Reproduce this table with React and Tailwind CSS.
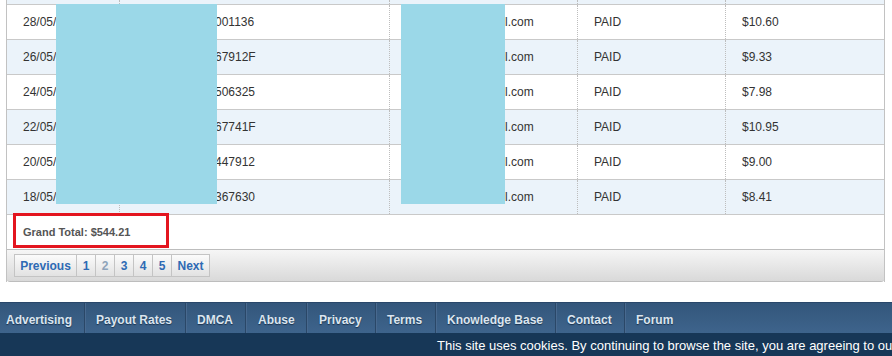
const rows = [
  { date: "28/05/2017", ref: "001136", email: "l.com", status: "PAID", amount: "$10.60" },
  { date: "26/05/2017", ref: "67912F", email: "l.com", status: "PAID", amount: "$9.33" },
  { date: "24/05/2017", ref: "506325", email: "l.com", status: "PAID", amount: "$7.98" },
  { date: "22/05/2017", ref: "67741F", email: "l.com", status: "PAID", amount: "$10.95" },
  { date: "20/05/2017", ref: "447912", email: "l.com", status: "PAID", amount: "$9.00" },
  { date: "18/05/2017", ref: "367630", email: "l.com", status: "PAID", amount: "$8.41" },
];

const navLinks = [
  { label: "Advertising", w: "w-[85px] pl-[6px]" },
  { label: "Payout Rates", w: "w-[101px] pl-[11px]" },
  { label: "DMCA", w: "w-[60px] pl-[11px]" },
  { label: "Abuse", w: "w-[61px] pl-[12px]" },
  { label: "Privacy", w: "w-[69px] pl-[12px]" },
  { label: "Terms", w: "w-[60px] pl-[11px]" },
  { label: "Knowledge Base", w: "w-[120px] pl-[11px]" },
  { label: "Contact", w: "w-[69px] pl-[11px]" },
  { label: "Forum", w: "pl-[11px]", last: true },
];

const pages = [
  { label: "Previous", w: "w-[63px]" },
  { label: "1", w: "w-[19px]" },
  { label: "2", w: "w-[19px]", current: true },
  { label: "3", w: "w-[19px]" },
  { label: "4", w: "w-[19px]" },
  { label: "5", w: "w-[19px]" },
  { label: "Next", w: "w-[38px]" },
];

const cell = "flex items-center pl-4 whitespace-nowrap overflow-hidden";
const sep = "border-l border-dotted border-[#bdbdbd]";

const Cells = ({ row }) => (
  <>
    <div className={`w-[112px] ${cell}`}>{row?.date}</div>
    <div className={`w-[270px] ${cell} ${sep}`}>
      {row && <span className="inline-block w-[79px] shrink-0" />}
      {row?.ref}
    </div>
    <div className={`w-[188px] ${cell} ${sep}`}>
      {row && <span className="inline-block w-[99px] shrink-0" />}
      {row?.email}
    </div>
    <div className={`w-[148px] ${cell} ${sep}`}>{row?.status}</div>
    <div className={`w-[159px] ${cell} ${sep}`}>{row?.amount}</div>
  </>
);

export default function App() {
  return (
    <div className="w-[892px] h-[356px] overflow-hidden bg-white font-['Liberation_Sans',Arial,sans-serif]">
      <div className="relative">
        <div className="ml-[6px] w-[879px] border-x border-[#c2c2c2] text-[12px] text-[#333]">
          {/* tail of the row above */}
          <div className="flex h-[4px] bg-[#ebf3fa]">
            <Cells />
          </div>
          {rows.map((row, i) => (
            <div
              key={row.date}
              className={`flex h-[35px] border-t border-[#c9c9c9] ${i % 2 ? "bg-[#ebf3fa]" : "bg-white"}`}
            >
              <Cells row={row} />
            </div>
          ))}
          <div className="flex items-center h-[35px] border-t border-[#c9c9c9] pl-4 text-[11px] font-bold text-[#555]">
            Grand Total: $544.21
          </div>
          <div className="h-[33px] border-t border-b border-[#bdbdbd] rounded-b-[3px] bg-gradient-to-b from-[#f6f6f6] to-[#d9d9d9] pl-[7px] pt-[4px]">
            <div className="flex">
              {pages.map((p, i) => (
                <button
                  key={p.label}
                  className={`${p.w} h-[23px] flex items-center justify-center border border-[#c4c4c4] ${i > 0 ? "border-l-0" : ""} bg-gradient-to-b from-[#fbfbfb] to-[#e2e2e2] text-[12px] font-bold ${p.current ? "text-[#8fa4ba]" : "text-[#2e6ab4]"}`}
                >
                  {p.label}
                </button>
              ))}
            </div>
          </div>
        </div>

        {/* redactions and highlight drawn over the table */}
        <div className="absolute left-[56px] top-[4px] w-[161px] h-[200px] bg-[#9bd8e8]" />
        <div className="absolute left-[401px] top-[4px] w-[104px] h-[200px] bg-[#9bd8e8]" />
        <div className="absolute left-[13px] top-[213px] w-[156px] h-[35px] border-[3px] border-[#e3151f]" />
      </div>

      <div className="mt-[20px]">
        <div className="flex h-[31px] border-t border-[#29476a] bg-gradient-to-b from-[#33567b] to-[#3e648c]">
          {navLinks.map((item) => (
            <div
              key={item.label}
              className={`${item.w} shrink-0 h-full pt-[10px] leading-[15px] text-[12px] font-bold text-[#dbe5ef] [text-shadow:0_1px_1px_#1b3350] whitespace-nowrap ${item.last ? "" : "border-r border-[#2a4767] shadow-[1px_0_0_#48698f]"}`}
            >
              {item.label}
            </div>
          ))}
        </div>
        <div className="h-[24px] bg-[#173757] pt-[3px] pl-[437px] text-[13px] leading-[20px] text-white whitespace-nowrap overflow-hidden">
          This site uses cookies. By continuing to browse the site, you are agreeing to our use of cookies.
        </div>
      </div>
    </div>
  );
}
